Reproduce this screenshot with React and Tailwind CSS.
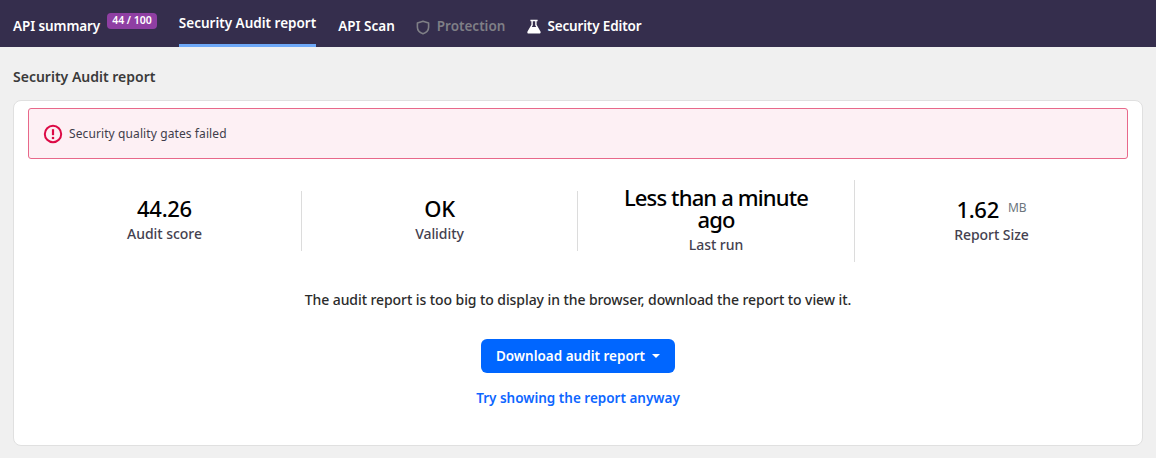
function Stat({ value, unit, label, last, tight }) {
  return (
    <div
      className={`flex flex-col items-center text-center pt-[6px] pb-[8px] ${
        last ? "" : "border-r border-[#dcdcdc]"
      }`}
    >
      <div
        className={`text-[22px] leading-[22px] font-medium text-black ${
          tight ? "tracking-[-0.85px] w-[200px]" : "tracking-[-0.3px]"
        }`}
      >
        {value}
        {unit && (
          <span className="text-[12px] text-[#6c757d] align-[6px] ml-[9px] font-normal tracking-normal">
            {unit}
          </span>
        )}
      </div>
      <div className="text-[14px] leading-[18px] mt-[6px] font-medium text-[#44414f] tracking-[-0.05px]">
        {label}
      </div>
    </div>
  );
}

export default function App() {
  return (
    <div className="min-h-[458px] bg-[#f0f0f0] font-['Noto_Sans',sans-serif]">
      {/* Tabs */}
      <div className="h-[47px] bg-[#352e4d] flex items-stretch pl-[13px] gap-[22px] text-[13.5px] font-semibold text-white">
        <div className="flex items-center pt-[6px]">
          <span className="tracking-[-0.1px]">API summary</span>
          <span className="ml-[7px] -mt-[11px] bg-[#8f3fa3] rounded-[4px] px-[5px] h-[16px] leading-[15px] text-[10.5px]">
            44 / 100
          </span>
        </div>
        <div className="flex items-center border-b-[3px] border-[#6ea8f7] pt-[3px]">
          Security Audit report
        </div>
        <div className="flex items-center pt-[6px]">API Scan</div>
        <div className="flex items-center pt-[6px] -ml-[1px] text-[#7f7f86]">
          <svg width="14" height="15" viewBox="0 0 14 15" fill="none" className="mr-[7px] mt-[2px]">
            <path
              d="M7 1.200 12.600 3v4.200c0 3-2.200 5.300-5.600 6.600C3.600 12.500 1.400 10.200 1.400 7.200V3L7 1.200Z"
              stroke="#7f7f86"
              strokeWidth="1.600"
              strokeLinejoin="round"
            />
          </svg>
          Protection
        </div>
        <div className="flex items-center pt-[6px] tracking-[-0.15px]">
          <svg width="14" height="15" viewBox="0 0 14 15" className="mr-[6px]">
            <path
              d="M3.400 0.800h7.200v1.400H9.600v3.600l3.900 6.600c.5.900-.1 2.100-1.200 2.100H1.700C.6 14.600 0 13.400 .5 12.400l3.900-6.600V2.200H3.400V.8Z"
              fill="#fff"
            />
            <path d="M5.800 2.200h2.400v4l1 1.800H4.800l1-1.800v-4Z" fill="#352e4d" />
          </svg>
          Security Editor
        </div>
      </div>

      {/* Content */}
      <div className="px-[13px] pt-[21px]">
        <h2 className="text-[14px] leading-[18px] font-semibold text-[#3a3a3a] mb-[14px]">
          Security Audit report
        </h2>

        <div className="bg-white border border-[#e0e0e0] rounded-[8px] px-[14px] pt-[7px] h-[346px]">
          <div className="h-[51px] flex items-center gap-[6px] bg-[#fdf0f4] border border-[#e8688a] rounded-[3px] px-[14px] text-[12px] text-[#3f3d4a] tracking-[0.1px]">
            <svg width="20" height="20" viewBox="0 0 20 20" fill="none">
              <circle cx="10" cy="10" r="8.200" stroke="#dc0a45" strokeWidth="2" />
              <path d="M10 5.200v6" stroke="#dc0a45" strokeWidth="2.200" />
              <circle cx="10" cy="14" r="1.300" fill="#dc0a45" />
            </svg>
            <span className="pt-[1px]">Security quality gates failed</span>
          </div>

          <div className="grid grid-cols-[274px_276px_277px_1fr] items-center mt-[21px]">
            <Stat value="44.26" label="Audit score" />
            <Stat value="OK" label="Validity" />
            <Stat value="Less than a minute ago" label="Last run" tight />
            <Stat value="1.62" unit="MB" label="Report Size" last />
          </div>

          <p className="mt-[29px] text-center text-[14px] leading-[18px] font-medium text-[#2b2b2b] tracking-[-0.08px]">
            The audit report is too big to display in the browser, download the report to view it.
          </p>

          <div className="flex flex-col items-center mt-[30px]">
            <button className="h-[34px] px-[15px] flex items-center gap-[6px] rounded-[6px] bg-[#0066ff] text-white text-[13.5px] font-semibold">
              Download audit report
              <svg width="8" height="4" viewBox="0 0 8 4" className="ml-[1px]">
                <path d="M0 0h8L4 4Z" fill="#fff" />
              </svg>
            </button>
            <a className="mt-[16px] text-[13.5px] leading-[18px] font-semibold text-[#0d66ff]">
              Try showing the report anyway
            </a>
          </div>
        </div>
      </div>
    </div>
  );
}
